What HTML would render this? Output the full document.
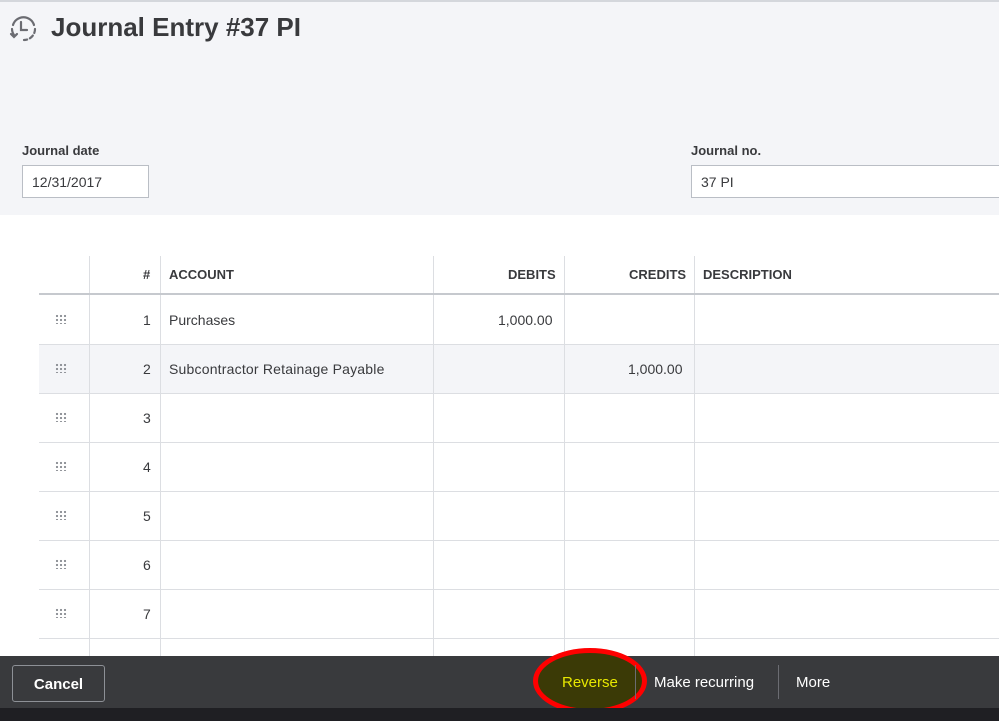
<!DOCTYPE html><html><head><style>
body{margin:0;width:999px;height:721px;overflow:hidden;background:#fff;font-family:"Liberation Sans",sans-serif;position:relative;color:#393a3d}
.top{position:absolute;left:0;top:0;width:999px;height:215px;background:#f4f5f8;border-top:2px solid #d4d7dc;box-sizing:border-box}
h1{position:absolute;left:51px;top:12px;margin:0;font-size:26px;font-weight:bold;color:#393a3d}
.lbl{position:absolute;font-size:13px;font-weight:bold;top:143px}
.inp{position:absolute;top:165px;height:33px;border:1px solid #babec5;background:#fff;box-sizing:border-box;font-size:14px;padding:8px 9px;color:#393a3d}
.v{position:absolute;top:256px;height:400px;width:1px;background:#dcdee2}
.h{position:absolute;left:39px;width:960px;height:1px;background:#dcdee2}
.t{position:absolute;font-size:14px}
.hd{position:absolute;top:267px;font-size:13px;font-weight:bold}
.dots{position:absolute;left:55px;width:12px;height:10px;background-image:radial-gradient(circle,#8d9096 1px,transparent 1.3px);background-size:4px 4px}
.bar{position:absolute;left:0;top:656px;width:999px;height:52px;background:#393a3d}
.tb{position:absolute;left:0;top:708px;width:999px;height:13px;background:#1f1f23}
</style></head><body>
<div class="top"></div>
<svg style="position:absolute;left:8px;top:14px" width="30" height="30" viewBox="0 0 30 30" fill="none" stroke="#6b6c72" stroke-width="2.2" stroke-linecap="round"><path d="M5 11 A11 11 0 0 1 26 11"/><path d="M27 15 A11 11 0 0 1 16 26" stroke-dasharray="4 3"/><path d="M4 15 A11 11 0 0 0 6 21"/><path d="M3 20 l3 3 l3 -3"/><path d="M13 8 v8 h6"/></svg>
<h1>Journal Entry #37 PI</h1>
<div class="lbl" style="left:22px">Journal date</div>
<div class="inp" style="left:22px;width:127px">12/31/2017</div>
<div class="lbl" style="left:691px">Journal no.</div>
<div class="inp" style="left:691px;width:320px">37 PI</div>
<div style="position:absolute;left:39px;top:344px;width:960px;height:49px;background:#f4f5f8"></div>
<div class="v" style="left:89px"></div><div class="v" style="left:160px"></div><div class="v" style="left:433px"></div><div class="v" style="left:564px"></div><div class="v" style="left:694px"></div>
<div class="h" style="top:293px;height:2px;background:#c6c9ce"></div>
<div class="h" style="top:344px"></div><div class="h" style="top:393px"></div><div class="h" style="top:442px"></div><div class="h" style="top:491px"></div><div class="h" style="top:540px"></div><div class="h" style="top:589px"></div><div class="h" style="top:638px"></div>
<div class="hd" style="left:143px">#</div><div class="hd" style="left:169px">ACCOUNT</div><div class="hd" style="left:508px">DEBITS</div><div class="hd" style="left:629px">CREDITS</div><div class="hd" style="left:703px">DESCRIPTION</div>
<div class="dots" style="top:314px"></div><div class="dots" style="top:363px"></div><div class="dots" style="top:412px"></div><div class="dots" style="top:461px"></div><div class="dots" style="top:510px"></div><div class="dots" style="top:559px"></div><div class="dots" style="top:608px"></div>
<div class="t" style="left:143px;top:312px">1</div><div class="t" style="left:143px;top:361px">2</div><div class="t" style="left:143px;top:410px">3</div><div class="t" style="left:143px;top:459px">4</div><div class="t" style="left:143px;top:508px">5</div><div class="t" style="left:143px;top:557px">6</div><div class="t" style="left:143px;top:606px">7</div>
<div class="t" style="left:169px;top:312px">Purchases</div><div class="t" style="left:498px;top:312px">1,000.00</div>
<div class="t" style="left:169px;top:361px;letter-spacing:0.2px">Subcontractor Retainage Payable</div><div class="t" style="left:628px;top:361px">1,000.00</div>
<div class="bar"></div>
<div style="position:absolute;left:12px;top:665px;width:93px;height:37px;border:1px solid #8d9096;border-radius:3px;box-sizing:border-box;color:#fff;font-weight:bold;font-size:15px;text-align:center;line-height:37px">Cancel</div>
<div style="position:absolute;left:533px;top:648px;width:114px;height:66px;border:5px solid #f00;border-radius:50%;box-sizing:border-box;background:#3b3a06"></div>
<div class="t" style="left:562px;top:674px;color:#e8e800;font-size:15px">Reverse</div>
<div style="position:absolute;left:635px;top:665px;width:1px;height:34px;background:#6b6c72"></div>
<div class="t" style="left:654px;top:674px;color:#fff;font-size:15px">Make recurring</div>
<div style="position:absolute;left:778px;top:665px;width:1px;height:34px;background:#6b6c72"></div>
<div class="t" style="left:796px;top:674px;color:#fff;font-size:15px">More</div>
<div class="tb"></div>
</body></html>
